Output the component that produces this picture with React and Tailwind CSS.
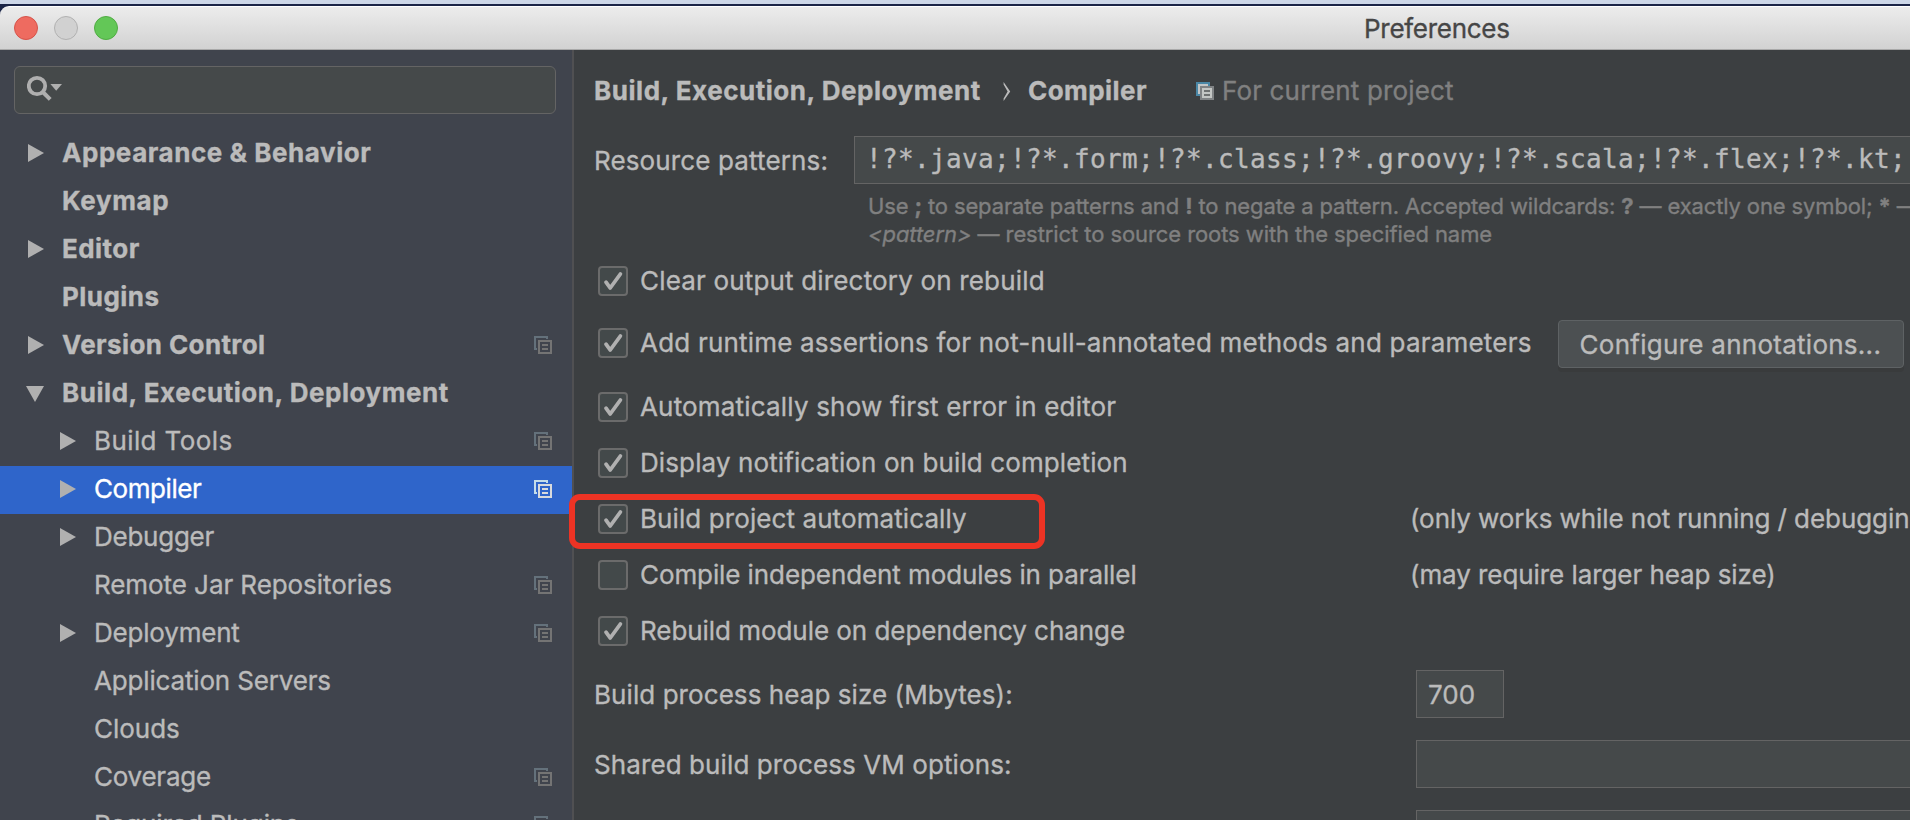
const TREE = [
  { label: "Appearance & Behavior", arrow: "right", bold: true, track: "tracking-[0.55px]" },
  { label: "Keymap", bold: true, track: "tracking-[0.6px]" },
  { label: "Editor", arrow: "right", bold: true, track: "tracking-[0.45px]" },
  { label: "Plugins", bold: true, track: "tracking-[0.45px]" },
  { label: "Version Control", arrow: "right", bold: true, project: true, track: "tracking-[0.39px]" },
  { label: "Build, Execution, Deployment", arrow: "down", bold: true, track: "tracking-[0.54px]" },
  { label: "Build Tools", arrow: "right", child: true, project: true, track: "tracking-[0.4px]" },
  { label: "Compiler", arrow: "right", child: true, project: true, selected: true, track: "tracking-[-0.43px]" },
  { label: "Debugger", arrow: "right", child: true, track: "tracking-[-0.25px]" },
  { label: "Remote Jar Repositories", child: true, project: true, track: "tracking-[-0.07px]" },
  { label: "Deployment", arrow: "right", child: true, project: true, track: "tracking-[-0.2px]" },
  { label: "Application Servers", child: true, track: "tracking-[-0.16px]" },
  { label: "Clouds", child: true, track: "tracking-[-0.03px]" },
  { label: "Coverage", child: true, project: true, track: "tracking-[-0.25px]" },
  { label: "Required Plugins", child: true, project: true, track: "tracking-[-0.11px]" },
];

const OPTIONS = [
  { label: "Clear output directory on rebuild", checked: true, gap: "mb-8", track: "tracking-[0.17px]" },
  {
    label: "Add runtime assertions for not-null-annotated methods and parameters",
    checked: true,
    gap: "mb-[34px]",
    track: "tracking-[0.2px]",
    button: "Configure annotations...",
  },
  { label: "Automatically show first error in editor", checked: true, gap: "mb-[26px]", track: "tracking-[0.18px]" },
  { label: "Display notification on build completion", checked: true, gap: "mb-[26px]", track: "tracking-[0.11px]" },
  {
    label: "Build project automatically",
    checked: true,
    gap: "mb-[26px]",
    track: "tracking-[0.09px]",
    note: "(only works while not running / debugging)",
    highlighted: true,
  },
  {
    label: "Compile independent modules in parallel",
    checked: false,
    gap: "mb-[26px]",
    track: "tracking-[-0.09px]",
    note: "(may require larger heap size)",
  },
  { label: "Rebuild module on dependency change", checked: true, gap: "mb-6", track: "tracking-[-0.05px]" },
];

function Arrow({ direction }) {
  return (
    <svg className="block h-[18px] w-[18px]" viewBox="0 0 18 18" fill="#b0b0b0">
      {direction === "right" && <path d="M2 0L18 9L2 18Z" />}
      {direction === "down" && <path d="M0 2H18L9 18Z" />}
    </svg>
  );
}

function ProjectIcon({ selected }) {
  const back = selected ? "#c3dcea" : "#64717b";
  const front = selected ? "#d8dadd" : "#747474";
  return (
    <svg className="block h-[18px] w-[18px]" viewBox="0 0 18 18" shapeRendering="crispEdges">
      <path fill={back} d="M0 0H14V3H12V2H2V12H3V14H0Z" />
      <path fill={front} fillRule="evenodd" d="M4 4H18V18H4ZM6 6V16H16V6Z" />
      <path fill={front} d="M8 8H14V10H8ZM8 12H14V14H8Z" />
    </svg>
  );
}

function TreeRow({ item }) {
  return (
    <div
      className={`flex h-12 shrink-0 items-start pt-[7px] pr-5 ${item.child ? "pl-[58px]" : "pl-[26px]"} ${
        item.selected ? "bg-[#2f65ca] text-white" : "text-[#bbbbbb]"
      }`}
    >
      <div className="mt-[7px] w-[18px] shrink-0">
        <Arrow direction={item.arrow} />
      </div>
      <span className={`grow whitespace-nowrap pl-[18px] ${item.bold ? "font-bold" : ""} ${item.track}`}>
        {item.label}
      </span>
      {item.project && (
        <div className="mt-[7px]">
          <ProjectIcon selected={item.selected} />
        </div>
      )}
    </div>
  );
}

function Checkbox({ checked }) {
  return (
    <div className="h-[30px] w-[30px] shrink-0 rounded-[4px] border-2 border-[#6b6b6b] bg-[#43494a]">
      {checked && (
        <svg className="block h-[26px] w-[26px]" viewBox="0 0 26 26" fill="none" stroke="#b0b0b0" strokeWidth="3.8">
          <path strokeLinecap="round" strokeLinejoin="round" d="M6 14.2L10.2 20L20.4 6" />
        </svg>
      )}
    </div>
  );
}

function Option({ item }) {
  return (
    <div className={`relative flex h-[30px] shrink-0 items-start pl-1 ${item.gap}`}>
      <Checkbox checked={item.checked} />
      <span className={`-mt-px whitespace-nowrap pl-3 ${item.note ? "w-[782px] shrink-0" : ""} ${item.track}`}>
        {item.label}
      </span>
      {item.note && <span className="-mt-px whitespace-nowrap tracking-[-0.07px]">{item.note}</span>}
      {item.button && (
        <button className="-mt-2 ml-[26px] flex h-12 w-[346px] shrink-0 items-start rounded-[4px] border border-[#5e6264] bg-[#4c5052] pt-2 pl-[21px] tracking-[0.27px] whitespace-nowrap shadow-[0_4px_0_0_#393b3c]">
          {item.button}
        </button>
      )}
      {item.highlighted && (
        <div className="absolute -top-[10px] -left-[25px] h-[55px] w-[476px] rounded-[11px] border-6 border-[#ed3324]" />
      )}
    </div>
  );
}

function TitleBar() {
  return (
    <header className="flex h-11 shrink-0 items-start rounded-tl-[9px] border-t border-b border-t-white border-b-[#a9a9a9] bg-linear-to-b from-[#ececec] to-[#d2d2d2] pt-[9px] pl-[14px]">
      <div className="flex gap-4">
        <div className="h-6 w-6 rounded-full border border-[#d6534a] bg-[#ee6b60]" />
        <div className="h-6 w-6 rounded-full border border-[#b1b1b1] bg-[#d1d1d1]" />
        <div className="h-6 w-6 rounded-full border border-[#50ac43] bg-[#63c757]" />
      </div>
      <h1 className="-mt-[3px] ml-[1246px] tracking-[-0.28px] text-[#464646]">Preferences</h1>
    </header>
  );
}

function Sidebar() {
  return (
    <aside className="flex w-[574px] shrink-0 flex-col overflow-hidden border-r-2 border-[#505052] bg-[#40444d] pt-4">
      <div className="mr-4 mb-4 ml-[14px] h-12 shrink-0 rounded-[6px] border border-[#646464] bg-[#45494a] pt-2 pl-3">
        <svg className="block h-7 w-9" viewBox="0 0 36 28">
          <circle cx="10" cy="11" r="8.2" fill="none" stroke="#afafaf" strokeWidth="3.8" />
          <path d="M15.8 17L23.2 24.4" stroke="#afafaf" strokeWidth="4" />
          <path d="M23.4 9H35L29.2 15.8Z" fill="#afafaf" />
        </svg>
      </div>
      <nav className="flex flex-col">
        {TREE.map((item) => (
          <TreeRow key={item.label} item={item} />
        ))}
      </nav>
    </aside>
  );
}

function Breadcrumb() {
  return (
    <div className="flex h-[31px] shrink-0 items-start whitespace-nowrap">
      <span className="w-[409px] font-bold tracking-[0.54px]">Build, Execution, Deployment</span>
      <svg className="mt-[7px] block h-[19px] w-[8px]" viewBox="0 0 8 19" fill="#bbbbbb">
        <path d="M0.6 0L7.2 9.5L0.6 19V16.4L4.6 9.5L0.6 2.6Z" />
      </svg>
      <span className="w-[185px] pl-[17px] font-bold tracking-[0.45px]">Compiler</span>
      <svg className="mt-[7px] block h-[18px] w-[18px]" viewBox="0 0 18 18" shapeRendering="crispEdges">
        <path fill="#4a87a6" d="M0 0H14V14H0Z" />
        <path fill="#c3c6c7" d="M2 2H12V12H2Z" />
        <path fill="#808385" d="M4 4H18V18H4Z" />
        <path fill="#c3c6c4" d="M6 6H16V16H6Z" />
        <path fill="#6f7272" d="M8 8H14V10H8ZM8 12H14V14H8Z" />
      </svg>
      <span className="pl-2 tracking-[0.15px] text-[#808080]">For current project</span>
    </div>
  );
}

function CompilerPanel() {
  return (
    <main className="flex min-w-0 grow flex-col bg-[#3c3f41] pt-[25px] pl-5 text-[#bbbbbb]">
      <Breadcrumb />
      <div className="mt-[30px] flex h-12 shrink-0 items-start">
        <label className="w-[260px] shrink-0 pt-[9px] tracking-[0.13px]">Resource patterns:</label>
        <div className="h-12 grow overflow-hidden border border-r-0 border-[#646464] bg-[#45494a] pt-[7px] pl-[11px] font-['DejaVu_Sans_Mono',monospace] tracking-[0.348px] whitespace-nowrap">
          !?*.java;!?*.form;!?*.class;!?*.groovy;!?*.scala;!?*.flex;!?*.kt;
        </div>
      </div>
      <div className="mt-2 mb-[18px] h-14 shrink-0 overflow-hidden pl-[274px] text-[22px] leading-[28px] whitespace-nowrap text-[#808080]">
        <p className="tracking-[-0.13px]">
          Use <b>;</b> to separate patterns and <b>!</b> to negate a pattern. Accepted wildcards: <b>?</b> — exactly
          one symbol; <b>*</b> — any string;
        </p>
        <p className="tracking-[-0.08px]">
          <i>&lt;pattern&gt;</i> — restrict to source roots with the specified name
        </p>
      </div>
      {OPTIONS.map((item) => (
        <Option key={item.label} item={item} />
      ))}
      <div className="mb-[22px] flex h-12 shrink-0 items-start">
        <label className="w-[822px] shrink-0 pt-[9px] tracking-[0.07px]">Build process heap size (Mbytes):</label>
        <div className="h-12 w-[88px] border border-[#646464] bg-[#45494a] pt-2 pl-[11px]">700</div>
      </div>
      <div className="mb-[22px] flex h-12 shrink-0 items-start">
        <label className="w-[822px] shrink-0 pt-[9px] tracking-[0.1px]">Shared build process VM options:</label>
        <div className="h-12 grow border border-r-0 border-[#646464] bg-[#45494a]" />
      </div>
      <div className="flex h-12 shrink-0 items-start">
        <div className="ml-[822px] h-12 grow border border-r-0 border-[#646464] bg-[#45494a]" />
      </div>
    </main>
  );
}

export default function App() {
  return (
    <div className="flex h-[820px] w-[1910px] flex-col overflow-hidden bg-[#1b2547] font-['Inter','Liberation_Sans',sans-serif] text-[26px] leading-[31px] [-webkit-text-stroke-width:0.35px]">
      <div className="mb-[2px] h-1 shrink-0 bg-[#cdd7e8]" />
      <TitleBar />
      <div className="flex min-h-0 grow">
        <Sidebar />
        <CompilerPanel />
      </div>
    </div>
  );
}
